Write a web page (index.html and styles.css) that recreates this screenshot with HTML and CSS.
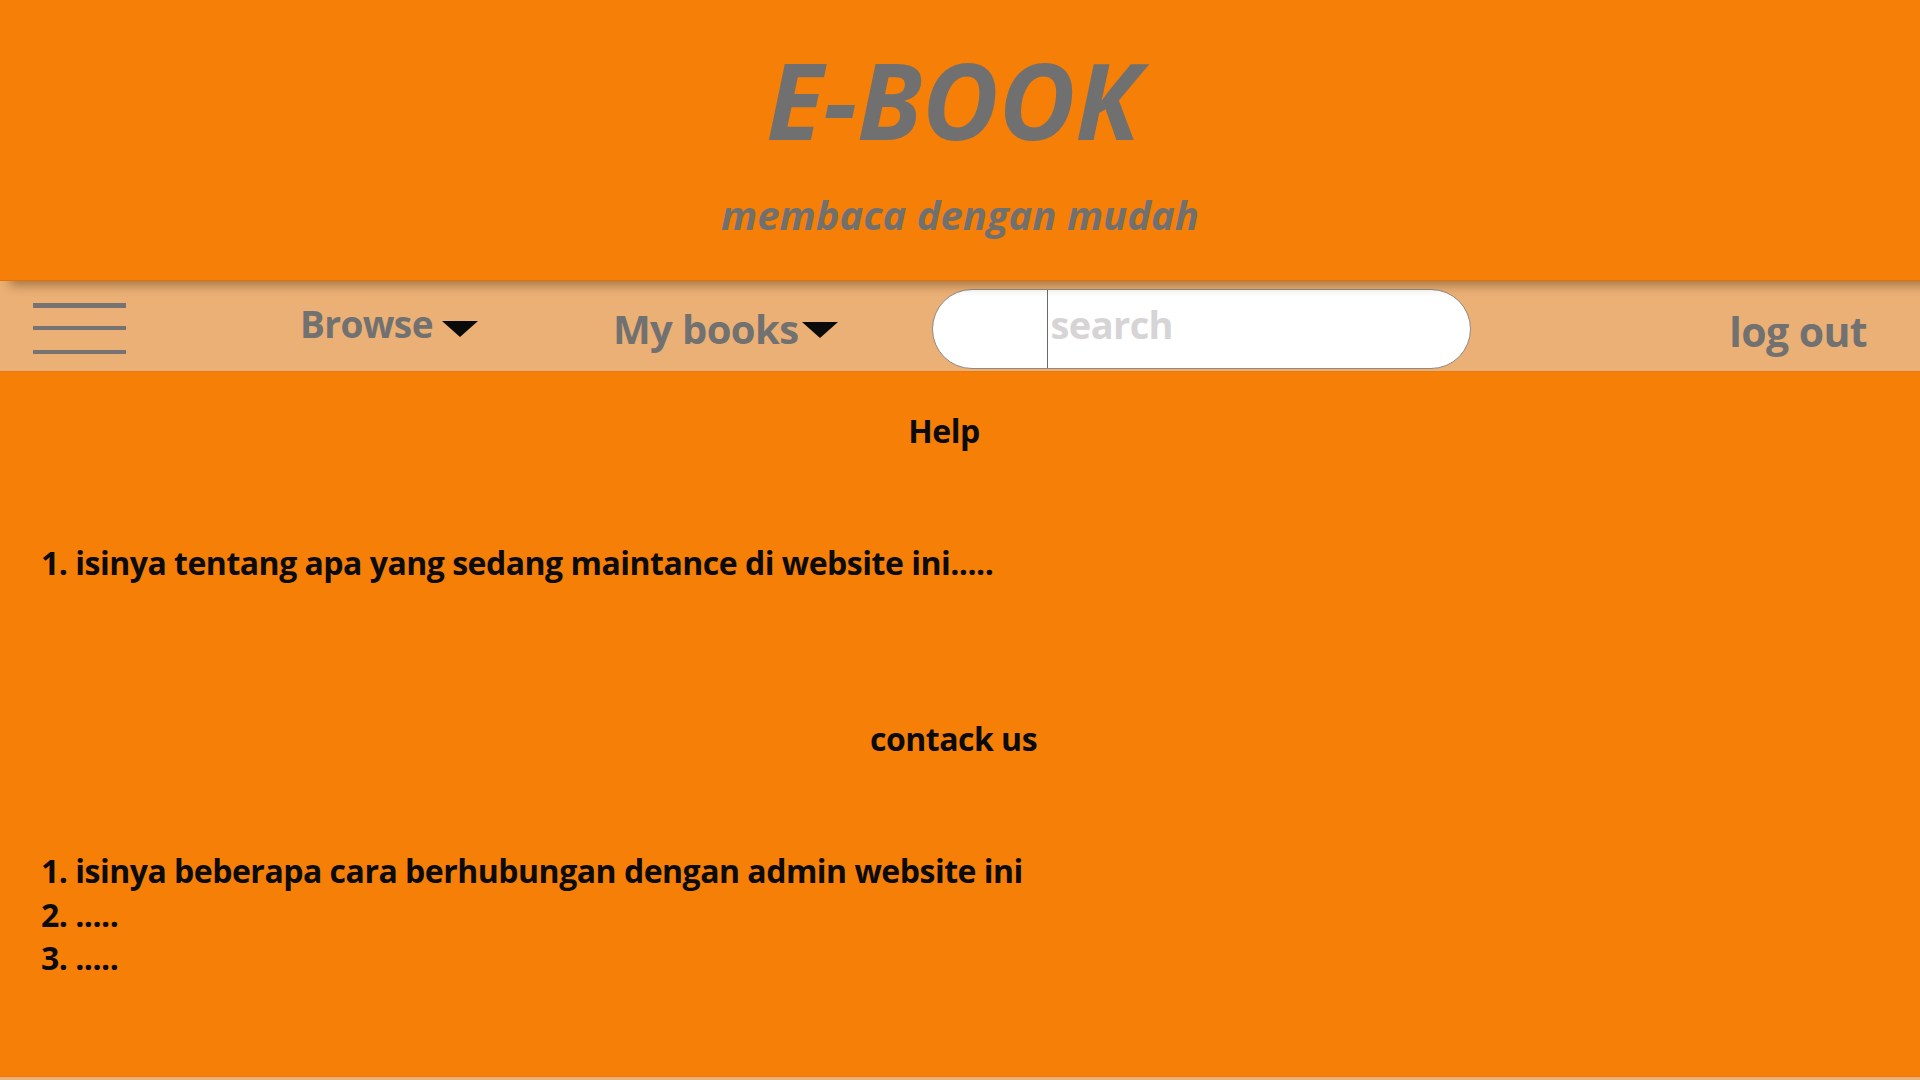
FILE: index.html
```html
<!DOCTYPE html>
<html lang="id">
<head>
<meta charset="utf-8">
<title>E-BOOK</title>
<link rel="stylesheet" href="styles.css">
</head>
<body>
<header class="header">
  <h1 class="title">E-BOOK</h1>
  <p class="tagline">membaca dengan mudah</p>
</header>
<nav class="nav">
  <div class="burger"><span></span><span></span><span></span></div>
  <a class="nav-item browse">Browse<i class="caret"></i></a>
  <a class="nav-item mybooks">My books<i class="caret"></i></a>
  <div class="search">
    <div class="search-left"></div>
    <input class="search-input" type="text" placeholder="search">
  </div>
  <a class="nav-item logout">log out</a>
</nav>
<main class="content">
  <h2 class="heading help">Help</h2>
  <p class="para first">1. isinya tentang apa yang sedang maintance di website ini.....</p>
  <h2 class="heading contact">contack us</h2>
  <p class="para second">1. isinya beberapa cara berhubungan dengan admin website ini<br>2. .....<br>3. .....</p>
</main>
<footer class="footer"></footer>
</body>
</html>
```
FILE: styles.css
```css
* { box-sizing: border-box; }
html, body { margin: 0; padding: 0; }
body {
  background: #f57f07;
  font-family: "Open Sans", "Noto Sans", sans-serif;
  width: 1920px;
  overflow: hidden;
}
.header {
  position: relative;
  z-index: 2;
  height: 281px;
  background: #f57f07;
  border-bottom: 1px solid #e2700f;
  box-shadow: 10px 4px 10px rgba(80, 40, 0, 0.45);
  text-align: center;
  color: #707070;
  padding-top: 50px;
}
.title {
  margin: 0;
  padding-right: 14px;
  font-size: 105px;
  line-height: 100px;
  font-weight: 700;
  font-style: italic;
  letter-spacing: 0;
}
.tagline {
  margin: 45px 0 0;
  font-size: 40px;
  line-height: 40px;
  font-weight: 700;
  font-style: italic;
}
.nav {
  position: relative;
  z-index: 1;
  height: 91px;
  background: #eab075;
  border-bottom: 1px solid #e87812;
  display: flex;
  align-items: flex-start;
  color: #717171;
}
.burger {
  margin: 22px 0 0 33px;
  width: 93px;
  flex-shrink: 0;
  display: flex;
  flex-direction: column;
  gap: 18px;
}
.burger span {
  display: block;
  height: 4.5px;
  background: #767372;
}
.burger span:nth-child(3) { margin-top: 1.5px; }
.nav-item {
  font-size: 37px;
  line-height: 40px;
  font-weight: 700;
  letter-spacing: -0.6px;
  display: flex;
  align-items: flex-start;
  white-space: nowrap;
  flex-shrink: 0;
}
.caret {
  display: block;
  width: 0;
  height: 0;
  border-left: 18.5px solid transparent;
  border-right: 18.5px solid transparent;
  border-top: 16px solid #0a0a0a;
}
.browse { margin: 22.5px 0 0 174px; }
.browse .caret { margin: 17.5px 0 0 9px; }
.mybooks { margin: 28px 0 0 135px; font-size: 40px; }
.mybooks .caret { margin: 13px 0 0 3px; }
.search {
  margin: 8px 0 0 94px;
  width: 539px;
  height: 80px;
  flex-shrink: 0;
  border: 1px solid #8e8a86;
  border-radius: 40px;
  background: #fff;
  display: flex;
  overflow: hidden;
}
.search-left {
  width: 115px;
  flex-shrink: 0;
  border-right: 1px solid #6a6a6a;
}
.search-input {
  flex: 1;
  min-width: 0;
  width: 100%;
  border: 0;
  outline: 0;
  background: transparent;
  padding: 0 0 10px 3px;
  font-family: "Open Sans", "Noto Sans", sans-serif;
  font-size: 38px;
  font-weight: 700;
  letter-spacing: -0.6px;
  color: #333;
}
.search-input::placeholder { color: #d6d4d4; }
.logout { margin: 29.5px 0 0 auto; padding-right: 53px; font-size: 41px; }
.content {
  height: 704px;
  padding: 37px 0 0 0;
  color: #0b0b0b;
}
.heading {
  margin: 0;
  font-size: 32px;
  line-height: 43.5px;
  font-weight: 700;
  letter-spacing: -0.5px;
  text-align: center;
}
.help { padding-right: 32px; }
.contact { padding-right: 13px; margin-top: 132.5px; }
.para {
  margin: 88.5px 0 0;
  padding-left: 41px;
  font-size: 32px;
  line-height: 43.5px;
  font-weight: 700;
  letter-spacing: -0.5px;
}
.footer {
  height: 30px;
  background: #eab075;
  border-top: 1px solid #e87812;
}
```
